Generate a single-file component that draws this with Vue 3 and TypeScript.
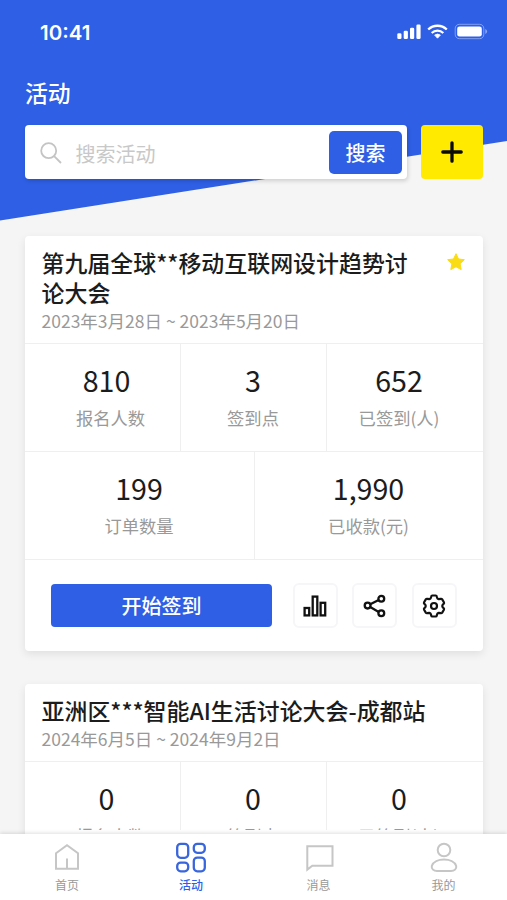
<script setup lang="ts">
interface Stat {
  value: string
  label: string
}

interface Activity {
  title: string
  period: string
  starred: boolean
  people: Stat[]
  orders: Stat[]
}

type TabIcon = 'home' | 'grid' | 'message' | 'user'

const activities: Activity[] = [
  {
    title: '第九届全球**移动互联网设计趋势讨论大会',
    period: '2023年3月28日 ~ 2023年5月20日',
    starred: true,
    people: [
      { value: '810', label: '报名人数' },
      { value: '3', label: '签到点' },
      { value: '652', label: '已签到(人)' },
    ],
    orders: [
      { value: '199', label: '订单数量' },
      { value: '1,990', label: '已收款(元)' },
    ],
  },
  {
    title: '亚洲区***智能AI生活讨论大会-成都站',
    period: '2024年6月5日 ~ 2024年9月2日',
    starred: false,
    people: [
      { value: '0', label: '报名人数' },
      { value: '0', label: '签到点' },
      { value: '0', label: '已签到(人)' },
    ],
    orders: [],
  },
]

const tabs: { label: string; icon: TabIcon; active: boolean }[] = [
  { label: '首页', icon: 'home', active: false },
  { label: '活动', icon: 'grid', active: true },
  { label: '消息', icon: 'message', active: false },
  { label: '我的', icon: 'user', active: false },
]
</script>

<template>
  <div class="page">
    <header class="hero">
      <svg class="hero-bg" width="507" height="222" viewBox="0 0 507 222">
        <path d="M0 0H507V141L0 220.5Z" fill="#2e5fe5" />
      </svg>
      <div class="hero-content">
        <div class="status">
          <span class="time">10:41</span>
          <svg class="signals" width="92" height="18" viewBox="0 0 92 18">
            <g fill="#fff">
              <rect x="0.3" y="10.2" width="4.2" height="5.8" rx="1.3" />
              <rect x="6.7" y="7.8" width="4.2" height="8.2" rx="1.3" />
              <rect x="13" y="4.8" width="4.2" height="11.2" rx="1.3" />
              <rect x="19.4" y="1.5" width="4.2" height="14.5" rx="1.3" />
              <path d="M37.6 12.1a5 5 0 0 1 5.8 0l-2.9 3.1z" stroke="#fff" stroke-width="0.8" stroke-linejoin="round" />
            </g>
            <g fill="none" stroke="#fff" stroke-width="2.3">
              <path d="M31.2 6.5a13.4 13.4 0 0 1 18.6 0" />
              <path d="M34.7 10a8.5 8.5 0 0 1 11.6 0" />
            </g>
            <rect x="58.2" y="1.3" width="28.6" height="14.4" rx="4.2" fill="none" stroke="#fff" stroke-opacity="0.4" />
            <rect x="60.2" y="3.4" width="24.6" height="10.2" rx="2.3" fill="#fff" />
            <path d="M88.3 6v5q1.8-.8 1.8-2.5T88.3 6z" fill="#fff" fill-opacity="0.45" />
          </svg>
        </div>
        <h1 class="heading">活动</h1>
        <div class="tools">
          <div class="search">
            <svg class="magnifier" width="22" height="22" viewBox="0 0 22 22" fill="none" stroke="#c4c4c4" stroke-width="1.8">
              <circle cx="8.7" cy="8.7" r="7.5" />
              <path d="M14.1 14.1 21 21" />
            </svg>
            <span class="placeholder">搜索活动</span>
            <button class="search-btn">搜索</button>
          </div>
          <button class="add-btn">
            <svg width="22" height="22" viewBox="0 0 22 22" stroke="#0a0a0a" stroke-width="3.3" stroke-linecap="round">
              <path d="M11 1.8v18.4M1.8 11h18.4" />
            </svg>
          </button>
        </div>
      </div>
    </header>

    <main class="list">
      <article v-for="item in activities" :key="item.title" class="card">
        <div class="card-head">
          <div class="card-text">
            <h2 class="title">{{ item.title }}</h2>
            <p class="period">{{ item.period }}</p>
          </div>
          <svg v-if="item.starred" class="star" width="20" height="20" viewBox="0 0 20 20">
            <path
              d="M10 1.7 12.5 7l5.8.7-4.2 4 1.1 5.9L10 14.8l-5.2 2.8 1.1-5.9-4.2-4L7.5 7z"
              fill="#f9dc16"
              stroke="#f9dc16"
              stroke-width="1"
              stroke-linejoin="round"
            />
          </svg>
        </div>
        <div class="row people" :class="{ partial: !item.orders.length }">
          <div v-for="stat in item.people" :key="stat.label" class="stat">
            <span class="value">{{ stat.value }}</span>
            <span class="label">{{ stat.label }}</span>
          </div>
        </div>
        <template v-if="item.orders.length">
          <div class="row orders">
            <div v-for="stat in item.orders" :key="stat.label" class="stat">
              <span class="value">{{ stat.value }}</span>
              <span class="label">{{ stat.label }}</span>
            </div>
          </div>
          <div class="actions">
            <button class="start-btn">开始签到</button>
            <button class="icon-btn">
              <svg width="24" height="24" viewBox="0 0 24 24" fill="none" stroke="#111" stroke-width="2.3">
                <rect x="1.6" y="14" width="4.6" height="7.400" />
                <rect x="9.700" y="2.600" width="4.600" height="18.800" />
                <rect x="17.600" y="8.800" width="4.600" height="12.600" />
              </svg>
            </button>
            <button class="icon-btn">
              <svg width="24" height="24" viewBox="0 0 24 24" fill="none" stroke="#111" stroke-width="2.300">
                <circle cx="4.600" cy="11.600" r="2.900" />
                <circle cx="18.300" cy="4.800" r="2.900" />
                <circle cx="18.300" cy="19.300" r="2.900" />
                <path d="M7.200 10.300 15.700 6M7.200 13l8.500 4.900" />
              </svg>
            </button>
            <button class="icon-btn">
              <svg width="24" height="24" viewBox="0 0 24 24" fill="none" stroke="#111" stroke-width="2.200" stroke-linejoin="round">
                <path
                  d="M10.300 1.500h3.400q.9 0 1.100 1l.3 1.200q.3 1.300 1.600 1.500l2-.4q1-.2 1.500.6l1.700 2.900q.5.900-.3 1.600l-.9.800q-.9 1.300 0 2.600l.9.800q.8.700.3 1.600l-1.700 2.900q-.5.800-1.500.6l-2-.4q-1.300.2-1.600 1.500l-.3 1.200q-.2 1-1.100 1h-3.400q-.9 0-1.100-1l-.3-1.200q-.3-1.300-1.600-1.500l-2 .4q-1 .2-1.500-.6l-1.700-2.900q-.5-.9.300-1.600l.9-.8q.9-1.300 0-2.600l-.9-.8q-.8-.7-.3-1.600l1.700-2.900q.5-.8 1.500-.6l2 .4q1.300-.2 1.600-1.500l.3-1.200q.2-1 1.100-1z"
                />
                <circle cx="12" cy="12" r="3" />
              </svg>
            </button>
          </div>
        </template>
      </article>
    </main>

    <nav class="tabbar">
      <a v-for="tab in tabs" :key="tab.icon" class="tab" :class="{ active: tab.active }">
        <svg class="tab-icon" width="32" height="32" viewBox="0 0 32 32" fill="none" stroke="currentColor" stroke-width="2">
          <path v-if="tab.icon === 'home'" d="M5 12.300 16 4.300l11 8V27.700H5zM16 27.700v-10.200" />
          <g v-else-if="tab.icon === 'grid'" stroke-width="2.300">
            <rect x="2.200" y="2.800" width="11" height="14" rx="3.500" />
            <rect x="18.800" y="2.800" width="11" height="9" rx="3.500" />
            <rect x="2.200" y="21.600" width="11" height="8.700" rx="3.500" />
            <rect x="18.800" y="16.600" width="11" height="13.700" rx="3.500" />
          </g>
          <path v-else-if="tab.icon === 'message'" d="M4.300 5.300h25.200v19.400H9.300L4.300 28.600z" />
          <g v-else>
            <circle cx="16" cy="9" r="6.300" />
            <path d="M3.800 25c1.400-4.200 6.700-6.400 12.200-6.400s10.800 2.200 12.200 6.400c.6 3-1.900 5-5.200 5H9c-3.300 0-5.800-2-5.200-5z" />
          </g>
        </svg>
        <span class="tab-label">{{ tab.label }}</span>
      </a>
    </nav>
  </div>
</template>

<style>
body {
  background: #f5f5f5;
}
</style>

<style scoped>
.page {
  display: flex;
  flex-direction: column;
  width: 507px;
  height: 900px;
  overflow: hidden;
  background: #f5f5f5;
  color: #1c1c1c;
  font-family: 'Noto Sans CJK SC', sans-serif;
}

h1,
h2,
p {
  margin: 0;
}

button {
  display: flex;
  align-items: center;
  justify-content: center;
  padding: 0;
  border: 0;
  font-family: inherit;
}

svg {
  flex: none;
}

.hero {
  display: grid;
  flex: none;
  height: 236px;
}

.hero-bg,
.hero-content {
  grid-area: 1 / 1;
}

.hero-content {
  padding: 0 24px 0 25px;
}

.status {
  display: flex;
  align-items: center;
  justify-content: space-between;
  height: 64px;
  margin-right: -6px;
  padding-left: 15px;
}

.time {
  color: #fff;
  font-family: Inter, sans-serif;
  font-size: 20.5px;
  font-weight: 600;
}

.heading {
  margin-top: 12px;
  color: #fff;
  font-size: 22.8px;
  font-weight: 500;
  line-height: 34px;
}

.tools {
  display: flex;
  gap: 14px;
  margin-top: 15px;
}

.search {
  display: flex;
  align-items: center;
  flex: 1;
  height: 54px;
  box-sizing: border-box;
  padding: 0 5px 0 15px;
  border-radius: 4px;
  background: #fff;
  box-shadow: 1px 2px 4px rgba(0, 0, 0, 0.16);
}

.magnifier {
  margin-top: 2px;
}

.placeholder {
  flex: 1;
  margin-left: 13.5px;
  padding-top: 3px;
  color: #c8c8c8;
  font-size: 20px;
  line-height: 30px;
}

.search-btn {
  width: 73px;
  height: 43px;
  border-radius: 5px;
  background: #2e5fe5;
  color: #fff;
  font-size: 20px;
  font-weight: 500;
}

.add-btn {
  width: 62px;
  height: 54px;
  border-radius: 4px;
  background: #ffea00;
}

.list {
  display: flex;
  flex: 1;
  flex-direction: column;
  gap: 33px;
  min-height: 0;
  padding: 0 24px 0 25px;
}

.card {
  flex: none;
  border-radius: 4px;
  background: #fff;
  box-shadow: 0 3px 8px rgba(0, 0, 0, 0.09);
}

.card-head {
  display: flex;
  justify-content: space-between;
  padding: 11px 17px 9px 16.5px;
  border-bottom: 1px solid #efefef;
}

.card-text {
  width: 386px;
}

.title {
  width: 386px;
  font-size: 22.95px;
  font-weight: 500;
  line-height: 30px;
  word-break: break-all;
}

.period {
  padding-top: 1px;
  color: #999;
  font-size: 17.5px;
  line-height: 26px;
}

.star {
  margin-top: 5px;
}

.row {
  display: grid;
  height: 107px;
  border-bottom: 1px solid #efefef;
}

.people {
  grid-template-columns: repeat(3, 146px);
  padding-left: 9px;
}

.people .stat:first-child .label {
  padding-left: 8px;
}

.orders {
  grid-template-columns: 1fr 1fr;
}

.partial {
  height: 68px;
  padding-bottom: 8px;
  border-bottom: 0;
}

.partial .stat {
  height: 68px;
  overflow: hidden;
}

.stat {
  display: flex;
  flex-direction: column;
  align-items: center;
  box-sizing: border-box;
  padding: 15px 1px 0 0;
}

.stat + .stat {
  border-left: 1px solid #efefef;
}

.value {
  font-size: 28.6px;
  line-height: 42px;
}

.label {
  margin-top: 2px;
  color: #999;
  font-size: 17.3px;
  line-height: 30px;
}

.actions {
  display: flex;
  align-items: center;
  height: 91px;
  padding-left: 26px;
}

.start-btn {
  width: 221px;
  height: 43px;
  margin-right: 20.5px;
  border-radius: 4px;
  background: #2e5fe5;
  color: #fff;
  font-size: 20px;
  font-weight: 500;
}

.icon-btn {
  width: 45px;
  height: 45px;
  box-sizing: border-box;
  margin-right: 14.5px;
  border: 2px solid #f6f6f9;
  border-radius: 6px;
  background: #fff;
}

.tabbar {
  z-index: 1;
  display: grid;
  flex: none;
  grid-template-columns: 124px 124px 131px 119px;
  height: 66px;
  box-sizing: border-box;
  padding: 7px 4px 0 5px;
  background: #fff;
  box-shadow: 0 -1px 4px rgba(0, 0, 0, 0.13);
}

.tab {
  display: flex;
  flex-direction: column;
  align-items: center;
  color: #c6c6c6;
}

.tab-label {
  margin-top: 3px;
  color: #999;
  font-size: 12px;
  line-height: 18px;
}

.active {
  color: #3a66dc;
}

.active .tab-label {
  color: #2e5fe5;
  font-weight: 500;
}
</style>
